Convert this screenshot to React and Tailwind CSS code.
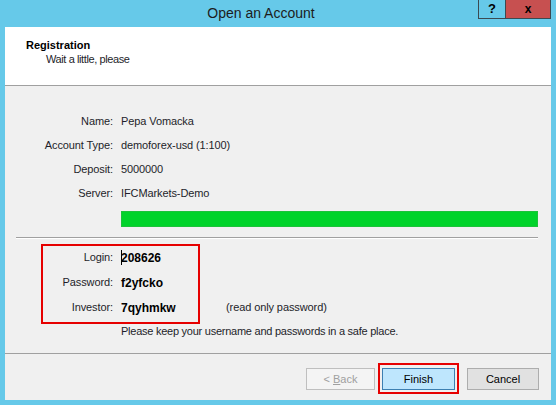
const font = { fontFamily: '"Liberation Sans", Arial, sans-serif' };

const InfoRow = ({ label, children, height = 'h-[24px]' }) => (
	<div className={`flex items-center ${height}`}>
		<div className="w-[108px] text-right">{label}</div>
		<div className="ml-[8px] flex items-center">{children}</div>
	</div>
);

const Button = ({ children, className = '' }) => (
	<button
		className={`h-[22px] border text-[11px] leading-none flex items-center justify-center ${className}`}
	>
		{children}
	</button>
);

export default function App() {
	return (
		<div
			className="w-[556px] h-[405px] bg-[#66c9e9] flex flex-col text-[#1e1e2a]"
			style={font}
		>
			{/* title bar */}
			<div className="h-[27px] flex shrink-0">
				<div className="flex-1 pl-[44px] text-center text-[14px] leading-[26px] text-[#1c1c1c]">
					Open an Account
				</div>
				<div className="flex h-[19px] mr-[5px]">
					<div className="w-[28px] border border-t-0 border-[#3b4a52] flex items-center justify-center text-[13px] font-bold text-black">
						?
					</div>
					<div className="w-[45px] bg-[#c75050] border border-l-0 border-t-0 border-[#3b4a52] flex items-center justify-center text-[12px] font-bold text-black">
						x
					</div>
				</div>
			</div>

			{/* client area */}
			<div className="flex-1 mx-[5px] mb-[5px] bg-[#f0f0f0] flex flex-col">
				<div className="h-[59px] bg-white border-b border-[#a0a0a0] shrink-0 pt-[12px] text-[11px] leading-[13px]">
					<div className="pl-[21px] font-bold text-black">Registration</div>
					<div className="pl-[41px] mt-px tracking-[-0.4px]">Wait a little, please</div>
				</div>

				<div className="flex-1 flex flex-col text-[11px] tracking-[-0.1px]">
					<div className="mt-[23px]">
						<InfoRow label="Name:">Pepa Vomacka</InfoRow>
						<InfoRow label="Account Type:">demoforex-usd (1:100)</InfoRow>
						<InfoRow label="Deposit:">5000000</InfoRow>
						<InfoRow label="Server:">IFCMarkets-Demo</InfoRow>
					</div>
					<div className="ml-[116px] mt-[6px] w-[417px] h-[16px] bg-[#00d32a] border border-[#1cc23a]" />
					<div className="ml-[11px] mt-[10px] w-[522px] border-t border-[#a0a0a0] border-b border-b-white" />

					<div className="relative mt-[6px]">
						<div className="absolute left-[36px] top-[-1px] w-[159px] h-[80px] border-2 border-[#e60000]" />
						<InfoRow label="Login:" height="h-[25px]">
							<span className="inline-block w-px h-[15px] bg-black -mr-px" />
							<span className="font-bold text-[12px] text-black tracking-normal">208626</span>
						</InfoRow>
						<InfoRow label="Password:" height="h-[25px]">
							<span className="font-bold text-[12px] text-black tracking-normal">f2yfcko</span>
						</InfoRow>
						<InfoRow label="Investor:" height="h-[25px]">
							<span className="w-[105px] font-bold text-[12px] text-black tracking-normal">7qyhmkw</span>
							<span>(read only password)</span>
						</InfoRow>
						<div className="h-[22px] flex items-center pl-[116px] tracking-[-0.25px]">
							Please keep your username and passwords in a safe place.
						</div>
					</div>
				</div>

				<div className="h-[47px] shrink-0 border-t border-[#a0a0a0] flex items-start justify-end pt-[14px] pr-[12px]">
					<Button className="w-[69px] bg-[#f4f4f4] border-[#bfbfbf] text-[#a0a0a0]">
						&lt; <span className="underline ml-[3px]">B</span>ack
					</Button>
					<div className="relative ml-[7px]">
						<div className="absolute -left-[4px] -right-[4px] -top-[5px] -bottom-[4px] border-2 border-[#e60000]" />
						<Button className="w-[73px] bg-[#bee6fd] border-[#3c7fb1] text-black">Finish</Button>
					</div>
					<Button className="ml-[12px] w-[72px] bg-[#e1e1e1] border-[#adadad] text-black">Cancel</Button>
				</div>
			</div>
		</div>
	);
}
